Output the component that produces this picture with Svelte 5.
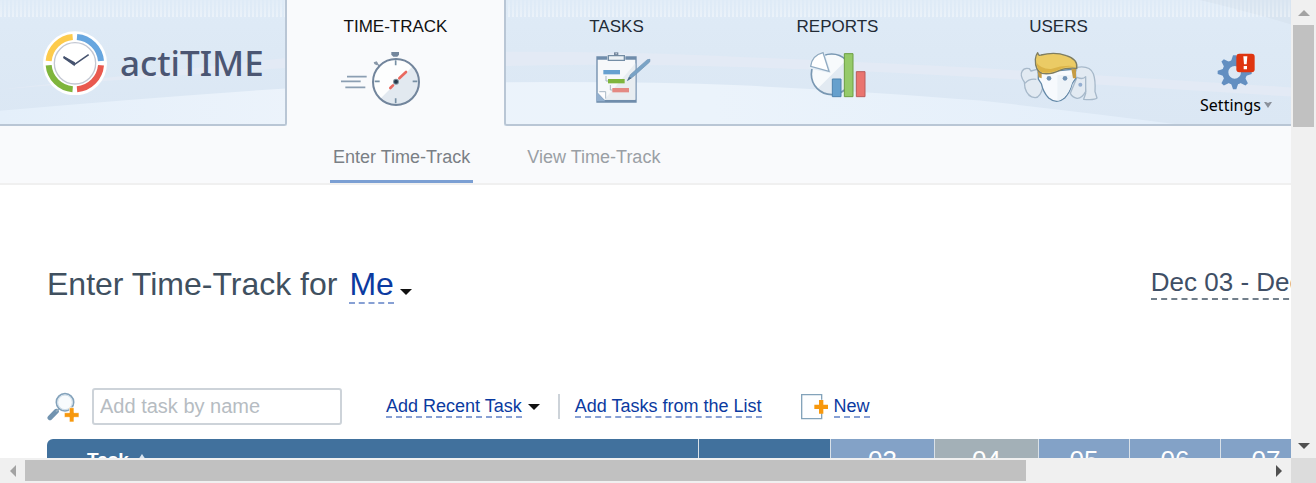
<script>
  const days = ['03', '04', '05', '06', '07'];
</script>

<div class="window">
  <div class="page">
    <header>
      <svg class="waves" viewBox="0 0 1291 124" preserveAspectRatio="none" aria-hidden="true">
        <defs>
          <linearGradient id="sky" x1="0" y1="0" x2="0" y2="1">
            <stop offset="0" stop-color="#dfebf7" />
            <stop offset="0.4" stop-color="#dde9f5" />
            <stop offset="1" stop-color="#dbe7f4" />
          </linearGradient>
          <linearGradient id="floor" x1="0" y1="0" x2="1" y2="0">
            <stop offset="0" stop-color="#e4effa" />
            <stop offset="0.25" stop-color="#ecf3fb" />
            <stop offset="0.6" stop-color="#ebf3fb" />
            <stop offset="1" stop-color="#e3eefa" />
          </linearGradient>
          <pattern id="stripes" width="4" height="17" patternUnits="userSpaceOnUse">
            <rect width="2" height="17" fill="#fff" />
          </pattern>
          <linearGradient id="fade" x1="0" y1="0" x2="0" y2="1">
            <stop offset="0" stop-color="#fff" stop-opacity="0.1" />
            <stop offset="1" stop-color="#fff" stop-opacity="0.4" />
          </linearGradient>
          <mask id="stripe-mask"><rect width="1291" height="17" fill="url(#fade)" /></mask>
        </defs>
        <rect width="1291" height="124" fill="url(#sky)" />
        <path d="M0 88Q150 72 286 57Q400 48 504 51Q640 51 740 56Q860 61 980 67L1291 86V95L980 76Q860 69 740 66Q620 62 504 65Q390 65 286 67Q150 76 0 88Z" fill="#e3eaf5" />
        <path d="M0 109Q150 96 286 87Q400 80 504 81Q640 80 740 84Q870 90 980 99Q1090 111 1190 124H0Z" fill="url(#floor)" />
        <path d="M1200 0Q1250 12 1291 24V0Z" fill="#d9e5f1" />
        <rect width="1291" height="17" fill="url(#stripes)" mask="url(#stripe-mask)" />
      </svg>

      <a class="brand" href="#home">
        <svg width="64" height="64" viewBox="130 92 192 192" aria-hidden="true">
          <circle cx="226" cy="189" r="96" fill="#fff" />
          <g fill="none" stroke-width="18">
            <path d="M147 182A79 79 0 0 1 219 110" stroke="#fdcb4c" />
            <path d="M232 110A79 79 0 0 1 304 182" stroke="#67a6df" />
            <path d="M304 195A79 79 0 0 1 232 267" stroke="#e9594f" />
            <path d="M219 267A79 79 0 0 1 147 195" stroke="#7fb53c" />
          </g>
          <circle cx="226" cy="189" r="62" fill="#fff" stroke="#c3c7d2" stroke-width="4" />
          <path d="M192 170L225 192L267 163" fill="none" stroke="#46536f" stroke-width="5" />
          <path d="M192 167L226 186L225 198L191 174Z" fill="#46536f" />
        </svg>
        <span>actiTIME</span>
      </a>

      <a class="tab active" href="#time">
        <span>TIME-TRACK</span>
        <svg width="120" height="60" viewBox="168 144 360 180" aria-hidden="true">
          <g stroke="#8b9eb2" stroke-width="5">
            <path d="M201 230H260M183 244H242M196 262H256" />
          </g>
          <path d="M334 156H357V164L352 170H340L334 164Z" fill="#74879d" />
          <path d="M281 187L290 184L294 190L290 196L283 192Z" fill="#8998a9" />
          <path d="M290 190L300 200" stroke="#8998a9" stroke-width="4" />
          <circle cx="348" cy="246" r="69" fill="#fdfefe" />
          <path d="M399 198A69 69 0 0 1 301 296Z" fill="#e2e9f0" />
          <circle cx="348" cy="246" r="69" fill="none" stroke="#72859c" stroke-width="6" />
          <path d="M347 181V196M347 295V310M284 244H299M398 244H412" stroke="#7790a4" stroke-width="5" />
          <path d="M358 235L378 216M331 264L339 256" stroke="#e9695f" stroke-width="8" stroke-linecap="round" />
          <circle cx="348" cy="245" r="9" fill="#7d909c" />
          <circle cx="348" cy="245" r="6" fill="#263b4d" />
        </svg>
      </a>

      <nav class="tabs">
        <a class="tab" href="#tasks">
          <span>TASKS</span>
          <svg width="120" height="60" viewBox="171 144 360 180" aria-hidden="true">
            <path d="M289 169H410V308H289Z" fill="#6f8cab" />
            <path d="M293 179H406V299H313L293 278Z" fill="#f6f8fa" />
            <path d="M406 190V299H313Z" fill="#e8edf1" />
            <path d="M291 277L316 304H289Z" fill="#92afce" />
            <path d="M293 277H317V299Z" fill="#fdfdfe" />
            <path d="M298 275H317V296" fill="none" stroke="#a9b8c5" stroke-width="3" />
            <path d="M322 164H376V184H322Z" fill="#f3f7fb" />
            <path d="M325 167H373V181H325Z" fill="#edf2f6" stroke="#748da5" stroke-width="4" />
            <path d="M342 157H355V167H342Z" fill="#74879d" />
            <path d="M347 159H350V163H347Z" fill="#d8e2ea" />
            <path d="M318 228V243H325M331 255V270H338" fill="none" stroke="#a8b7c0" stroke-width="3" />
            <path d="M310 210H360V223H310Z" fill="#66a0d0" />
            <path d="M324 237H374V250H324Z" fill="#7fb53d" />
            <path d="M337 264H387V277H337Z" fill="#e48982" />
            <path d="M442 179L450 178L449 186L401 229L382 242L391 224Z" fill="#79a3c6" stroke="#6c91b2" stroke-width="2" />
            <path d="M382 242L387 231L395 234Z" fill="#536e89" />
          </svg>
        </a>
        <a class="tab" href="#reports">
          <span>REPORTS</span>
          <svg width="120" height="60" viewBox="114 144 360 180" aria-hidden="true">
            <circle cx="275" cy="223" r="61" fill="#f7fafc" />
            <path d="M320 180A61 61 0 0 1 232 267Z" fill="#e2eaf2" />
            <circle cx="275" cy="223" r="61" fill="none" stroke="#7897b2" stroke-width="5" />
            <path d="M267 214L210 202Q216 166 249 157Z" fill="#fff" stroke="#e4edf5" stroke-width="8" />
            <path d="M267 214L212 199Q216 166 249 158Z" fill="#fff" stroke="#91abc2" stroke-width="4" />
            <path d="M277 237H303V290H277Z" fill="#66a0cd" stroke="#4d83ae" stroke-width="3" />
            <path d="M313 161H339V290H313Z" fill="#95ca69" stroke="#6c9e42" stroke-width="3" />
            <path d="M349 215H375V290H349Z" fill="#ea746f" stroke="#b95c5c" stroke-width="3" />
          </svg>
        </a>
        <a class="tab" href="#users">
          <span>USERS</span>
          <svg width="120" height="60" viewBox="58 144 360 180" aria-hidden="true">
            <g fill="#e2eaf2" stroke="#a7b9ca" stroke-width="4" stroke-linejoin="round">
              <path d="M134 246Q120 227 127 214Q133 202 149 206L154 213L172 208L190 260Q182 294 166 293Q144 291 136 264Z" />
              <path d="M136 250Q148 235 170 238" fill="none" />
              <path d="M293 202Q330 196 341 221Q348 240 346 275L352 294Q345 301 312 298L318 280L316 240L280 235Z" />
              <path d="M292 232Q310 240 318 230V275Q306 296 292 295Q278 292 272 280Z" />
            </g>
            <path d="M176 218L176 237L185 251Q191 278 207 294Q231 314 255 294Q271 277 277 251L288 236L287 207Z" fill="#f7fafd" stroke="#6489a8" stroke-width="4" />
            <path d="M233 225H284L277 250Q269 280 250 295Q241 303 233 303Z" fill="#edf3f8" />
            <path d="M173 208L186 220V235L177 232ZM275 207H289V235H280Z" fill="#c59c45" />
            <path d="M174 158Q177 169 184 165Q226 154 260 167Q296 178 291 205Q259 203 240 211Q211 225 187 220Q166 213 167 178Q168 166 174 158Z" fill="#ebcb65" stroke="#7e7d61" stroke-width="4" stroke-linejoin="round" />
            <path d="M170 187Q183 208 214 207Q253 194 286 199Q258 199 240 208Q211 222 187 217Q173 212 170 187Z" fill="#dbb347" />
            <circle cx="208" cy="235" r="7" fill="#6f91b4" />
            <circle cx="256" cy="235" r="7" fill="#6f91b4" />
            <circle cx="302" cy="254" r="6" fill="#94aed0" />
          </svg>
        </a>
        <button class="settings">
          <svg width="40" height="40" viewBox="710 158 120 120" aria-hidden="true">
            <g transform="translate(766 216)">
              <circle r="28" fill="none" stroke="#638fc1" stroke-width="18" />
              {#each [0, 45, 90, 135, 180, 225, 270, 315] as angle}
                <path d="M-11 -33L-5 -51H5L11 -33Z" fill="#638fc1" transform="rotate({angle})" />
              {/each}
            </g>
            <rect x="771" y="160" width="55" height="56" rx="9" fill="#df3510" />
            <path d="M792 168H804L802 192H794ZM793 197H803V207H793Z" fill="#fff" />
          </svg>
          <span>Settings
            <svg width="8" height="6" viewBox="0 0 8 6" aria-hidden="true"><path d="M0 0H2L4 1L6 0H8L4 6Z" fill="#8a919b" /></svg>
          </span>
        </button>
      </nav>
    </header>

    <nav class="subnav">
      <a class="current" href="#enter">Enter Time-Track</a>
      <a href="#view">View Time-Track</a>
    </nav>

    <main>
      <div class="title">
        <h1>Enter Time-Track for <button class="who">Me</button><i class="caret"></i></h1>
        <button class="range">Dec 03 - Dec 09, 2017</button>
      </div>

      <div class="tools">
        <svg width="32" height="30" viewBox="50 52 96 90" aria-hidden="true">
          <path d="M59 129L78 110" stroke="#7193b0" stroke-width="15" stroke-linecap="round" />
          <path d="M77 111L87 101" stroke="#95adbf" stroke-width="5" />
          <circle cx="104" cy="83" r="26" fill="#f8fbfd" stroke="#83a2bb" stroke-width="5" />
          <circle cx="104" cy="83" r="22" fill="none" stroke="#cbdbe7" stroke-width="3" />
          <path d="M117 99H131V114H146V128H131V142H117V128H102V114H117Z" fill="#f7980d" stroke="#fff" stroke-width="2" />
        </svg>
        <input type="text" placeholder="Add task by name" aria-label="Add task by name" />
        <button class="link">Add Recent Task</button><i class="caret"></i>
        <span class="rule"></span>
        <button class="link">Add Tasks from the List</button>
        <svg class="sheet" width="28" height="26" viewBox="333 56 84 78" aria-hidden="true">
          <path d="M395 73V58H335V130H395V114" fill="#fdfeff" stroke="#83a3ba" stroke-width="4" />
          <path d="M387 74H400V88H414V101H400V115H387V101H373V88H387Z" fill="#f7980d" />
        </svg>
        <button class="link">New</button>
      </div>

      <table>
        <colgroup>
          <col class="c-task" /><col class="c-status" /><col class="c-wide" /><col class="c-wide" />
          <col class="c-day" /><col class="c-day" /><col class="c-day" />
        </colgroup>
        <thead>
          <tr>
            <th class="task">Task <svg width="8" height="6" viewBox="0 0 8 6" aria-hidden="true"><path d="M0 6L4 0L8 6Z" fill="#d8e5f1" /></svg></th>
            <th></th>
            {#each days as day, i}
              <th class="day" class:today={i === 1}>{day}</th>
            {/each}
          </tr>
        </thead>
      </table>
    </main>
  </div>

  <div class="bar vertical">
    <button aria-label="Scroll up"><svg width="12" height="6" viewBox="0 0 12 6"><path d="M0 6L6 0L12 6Z" fill="#a3a3a3" /></svg></button>
    <div class="track"><div class="thumb"></div></div>
    <button aria-label="Scroll down"><svg width="12" height="6" viewBox="0 0 12 6"><path d="M0 0H12L6 6Z" fill="#505050" /></svg></button>
  </div>
  <div class="bar horizontal">
    <button aria-label="Scroll left"><svg width="6" height="12" viewBox="0 0 6 12"><path d="M6 0L0 6L6 12Z" fill="#a3a3a3" /></svg></button>
    <div class="track"><div class="thumb"></div></div>
    <button aria-label="Scroll right"><svg width="6" height="12" viewBox="0 0 6 12"><path d="M0 0L6 6L0 12Z" fill="#505050" /></svg></button>
  </div>
  <div class="corner"></div>
</div>

<style>
  :global(body) { overflow: hidden; }
  .window {
    display: grid;
    grid-template-columns: minmax(0, 1fr) 25px;
    grid-template-rows: minmax(0, 1fr) 25px;
    height: 100vh;
    font-family: 'Liberation Sans', Arial, sans-serif;
    background: #fff;
  }
  .window * { box-sizing: border-box; }
  .page { overflow: hidden; }
  a { color: inherit; text-decoration: none; }
  button {
    padding: 0;
    border: 0;
    background: none;
    font: inherit;
    color: inherit;
    cursor: pointer;
  }
  svg { display: block; }

  header {
    position: relative;
    display: flex;
    background: #f9fafc;
  }
  .waves {
    position: absolute;
    inset: 0;
    width: 100%;
    height: 100%;
  }
  .brand, .tab, .tabs { position: relative; }
  .brand {
    display: flex;
    flex: 0 0 287px;
    align-items: center;
    gap: 13px;
    padding: 2px 0 0 43px;
    border: solid #b9c6d5;
    border-width: 0 2px 2px 0;
    border-radius: 0 0 3px 0;
    font: 500 35px/40px 'Noto Sans', sans-serif;
    color: #4b5673;
  }
  .tab {
    display: flex;
    flex: 0 0 221px;
    flex-direction: column;
    align-items: center;
    gap: 11px;
    padding: 17px 0 16px;
    font-size: 17px;
    line-height: 20px;
    color: #222b36;
  }
  .tab.active {
    flex-basis: 217px;
    background: #f9fafc;
    color: #111;
  }
  .tabs {
    display: flex;
    flex: 1;
    min-width: 0;
    border: solid #b9c6d5;
    border-width: 0 0 2px 2px;
    border-radius: 0 0 0 3px;
  }
  .settings {
    display: flex;
    flex: 1;
    flex-direction: column;
    align-items: center;
    justify-content: flex-end;
    padding: 0 0 7px 12px;
    font: 16px/24px 'Noto Sans', sans-serif;
    color: #000;
  }
  .settings span {
    display: flex;
    align-items: center;
    gap: 3px;
  }

  .subnav {
    display: flex;
    gap: 51px;
    padding: 0 330px;
    border-bottom: 2px solid #f0f0f0;
    background: #f9fafc;
    font-size: 18px;
    line-height: 20px;
    white-space: nowrap;
    color: #9a9fa5;
  }
  .subnav a {
    padding: 21px 3px 13px;
    border-bottom: 3px solid transparent;
  }
  .subnav .current {
    border-color: #7b9fd3;
    color: #7a7f85;
  }

  main { padding: 81px 0 0 47px; }
  .title {
    display: flex;
    justify-content: space-between;
    align-items: flex-start;
    white-space: nowrap;
  }
  h1 {
    display: flex;
    margin: 0;
    font-size: 32px;
    font-weight: 400;
    line-height: 36px;
    color: #40505f;
  }
  .who {
    margin-left: 12px;
    border-bottom: 2px dashed #87a0d4;
    color: #0b3aa0;
  }
  .range {
    flex: 0 0 auto;
    margin-right: -120px;
    border-bottom: 2px dashed #727f8b;
    font-size: 26px;
    line-height: 32px;
    color: #3f4f66;
  }
  .caret {
    border: solid transparent;
    border-width: 6px 6px 0;
    border-top-color: #111;
  }
  h1 .caret {
    align-self: flex-end;
    margin: 0 0 9px 6px;
  }

  .tools {
    display: flex;
    align-items: center;
    padding: 84px 0 14px;
    font-size: 18px;
    line-height: 20px;
    white-space: nowrap;
  }
  input {
    width: 250px;
    height: 37px;
    margin: 0 44px 0 13px;
    padding: 0 6px;
    border: 2px solid #cdd3d9;
    border-radius: 3px;
    font: 20px/24px 'Liberation Sans', Arial, sans-serif;
    color: #333;
  }
  input::placeholder { color: #b6bcc2; opacity: 1; }
  .link {
    border-bottom: 2px dashed #87a0d4;
    color: #0b3aa0;
  }
  .tools .caret { margin-left: 6px; }
  .rule {
    width: 2px;
    height: 25px;
    margin: 0 15px 0 18px;
    background: #cdd3d9;
  }
  .sheet { margin: 0 5px 0 39px; }

  table {
    width: max-content;
    table-layout: fixed;
    border-collapse: separate;
    border-spacing: 0;
    color: #fff;
  }
  .c-task { width: 652px; }
  .c-status { width: 132px; }
  .c-wide { width: 104px; }
  .c-day { width: 91px; }
  th {
    height: 60px;
    padding: 9px 0;
    border-right: 1px solid #d9e1e8;
    background: #41719d;
    font-size: 19px;
    line-height: 24px;
    vertical-align: top;
  }
  .task {
    padding-left: 40px;
    border-top-left-radius: 6px;
    text-align: left;
  }
  .task svg { display: inline-block; margin: 0 0 6px 4px; }
  .day {
    background: #83a2c7;
    font-size: 26px;
    font-weight: 400;
  }
  .today { background: #a3b0b7; }

  .bar {
    display: flex;
    background: #f0f0f0;
  }
  .bar button {
    display: flex;
    flex: 0 0 25px;
    align-items: center;
    justify-content: center;
  }
  .track { display: grid; flex: 1; }
  .thumb { background: #c1c1c1; }
  .vertical { flex-direction: column; }
  .vertical .track {
    grid-template-rows: 1fr 3fr;
    padding: 0 2px;
  }
  .horizontal .track {
    grid-template-columns: 25fr 6fr;
    padding: 2px 0;
  }
  .corner { background: #dcdcdc; }
</style>
